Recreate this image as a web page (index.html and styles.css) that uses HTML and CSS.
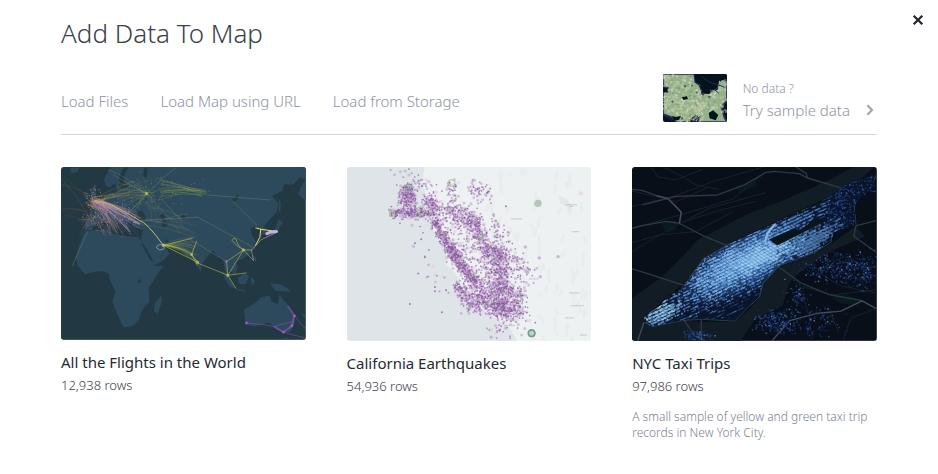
FILE: index.html
```html
<!DOCTYPE html>
<html lang="en">
<head>
<meta charset="utf-8">
<title>Add Data To Map</title>
<link rel="stylesheet" href="styles.css">
</head>
<body>
<main class="modal">
  <button class="close" type="button" aria-label="Close">
    <svg viewBox="0 0 12 12" width="12" height="12"><path d="M1.7 1.7 10.3 10.3M10.3 1.7 1.7 10.3" fill="none" stroke="#242730" stroke-width="2.3"/></svg>
  </button>
  <h1 class="title">Add Data To Map</h1>
  <div class="toolbar">
    <nav class="tabs">
      <button class="tab" type="button">Load Files</button>
      <button class="tab" type="button">Load Map using URL</button>
      <button class="tab" type="button">Load from Storage</button>
    </nav>
    <a class="sample" href="#samples">
      <svg class="thumb" viewBox="0 0 192 144" aria-hidden="true">
        <rect width="192" height="144" fill="#04131c"/>
        <path d="M0 0H94L97 24 112 35 118 62 142 54 162 46 165 25 180 15 192 20V80L175 98 184 130 192 144H115L100 125 70 144H40L25 130 0 120V57L13 54 14 41 0 38Z" fill="#94b18a" stroke="#282e5a" stroke-width="5"/>
        <g id="terrain"></g>
        <path d="M107 35 119 39 130 36 144 52 140 60 124 59ZM137 117 150 109 166 123 158 139 140 133ZM56 70 72 67 75 75 62 78ZM0 38 14 44 12 54 0 54ZM26 126 40 129 54 125 48 138 34 140ZM94 0H192V15L169 20 158 46 145 48 119 32 98 25Z" fill="#04131c"/>
        <path d="M118 8C140 32 158 27 184 40M153 46 168 58M0 122 26 139M94 139 112 127" fill="none" stroke="#252d56" stroke-width="3"/>
      </svg>
      <span class="sample-text"><span class="hint">No data ?</span><span class="try">Try sample data</span></span>
      <svg class="chevron" viewBox="0 0 8 12" width="8" height="12"><path d="M1.4 1.2 6 6 1.4 10.8" fill="none" stroke="#a0a7b4" stroke-width="2.2"/></svg>
    </a>
  </div>
  <section class="maps" id="samples">
    <article class="card">
      <svg class="map flights" viewBox="18 21 735 519" preserveAspectRatio="none" aria-hidden="true">
        <rect x="18" y="21" width="735" height="519" fill="#223842"/>
        <g fill="#2c4a5b">
          <path d="M167 21 148 55 151 76 164 83 178 70 187 84 186 98 160 101 135 118 106 138 118 150 115 176 91 181 90 207 108 210 129 185 151 181 166 174 184 197 190 188 177 172 184 168 207 190 215 207 222 201 218 190 232 184 237 203 264 207 258 235 270 265 293 312 302 315 328 299 344 281 329 257 350 266 380 272 395 288 408 293 420 310 438 336 441 312 458 289 475 272 490 290 504 298 512 340 522 360 520 329 540 345 549 323 543 303 562 297 584 283 605 250 590 222 586 207 600 199 614 206 621 226 636 219 628 199 648 174 667 155 670 128 652 108 682 92 689 73 715 74 735 52 753 60V21Z"/>
          <path d="M105 212 150 208 185 225 215 229 250 231 262 245 285 290 298 318 325 318 300 355 281 385 284 425 262 450 250 485 232 499 205 502 190 470 172 425 182 395 165 362 162 342 145 334 125 335 90 343 69 318 62 290 75 250 86 222Z"/>
          <path d="M319 407 321 425 309 461 297 455 300 430ZM567 450 600 430 620 412 645 407 650 425 668 433 675 403 690 430 715 465 721 490 706 517 682 517 660 500 640 488 600 500 572 495ZM107 86 117 80 127 111 107 117ZM88 101 102 98 101 113 89 115ZM45 23 75 22 66 37 48 40ZM672 113 678 130 676 165 671 148ZM671 178 685 188 674 200 670 218 642 229 637 222 660 211ZM548 355 569 339 583 349 571 374 553 372ZM501 332 521 350 541 384 528 383 512 361ZM541 385 570 390 573 395 545 391ZM590 350 601 365 593 378 588 363ZM645 371 675 372 699 385 710 398 685 394 662 393ZM685 533 702 534 694 540 686 540ZM593 287 604 293 603 307 595 300ZM738 80 753 60V120L744 116 730 102ZM740 457 749 464 753 475 746 472Z"/>
        </g>
        <path d="M192 55 201 31 212 21 219 25 207 49 207 67 223 78 201 88 193 80ZM244 169 250 152 263 154 270 167 275 179 257 184 240 180ZM315 168 324 156 334 163 329 175 338 193 327 203 319 191 322 181ZM378 169 386 162 394 173 383 178ZM268 23 279 27 274 55 265 49ZM257 246 272 262 292 297 294 309 284 298ZM331 235 343 247 353 248 348 253 333 247ZM530 119 541 112 551 102 548 119 537 125ZM249 360 256 358 258 368 250 370Z" fill="#223842"/>
        <g id="flights" fill="none" stroke-linecap="round"></g>
        <g fill="none" stroke-linecap="round" stroke-linejoin="round">
          <path d="M120 122C166 126 208 155 253 181Q277 188 325 256" stroke="#c7b87a" stroke-width="3"/>
          <path d="M325 256Q370 258 410 284L432 311M410 284 425 244M410 284 427 315M325 256 429 307M325 256 412 235" stroke="#b9b93b" stroke-width="3" stroke-opacity=".7"/>
          <path d="M432 311 519 346 543 385M519 346 574 339M519 346 566 270M566 270Q545 260 532 242 532 233 543 237 548 258 566 270L590 270M515 305 566 270M515 305 519 346" stroke="#b7bd43" stroke-width="3" stroke-opacity=".6"/>
          <path d="M603 204 618 208 615 232 602 257M618 208 668 215" stroke="#f1dc70" stroke-width="3"/>
          <path d="M590 272 618 240 668 216M566 270 596 302 590 272" stroke="#ba9798" stroke-width="2"/>
          <path d="M636 221 645 217 664 215" stroke="#c9aee4" stroke-width="9"/>
          <path d="M575 489 630 495 658 500 686 517 711 498 719 468 689 425M658 500 711 485M711 498 719 468 753 508M686 517 753 535" stroke="#9659bd" stroke-width="2" stroke-opacity=".7"/>
          <path d="M658 500 686 517 711 498 719 468 700 440" stroke="#8a50b4" stroke-width="6" stroke-opacity=".55"/>
          <path d="M575 489h0M686 517h0M711 498h0M719 468h0M515 305h0" stroke="#b062d2" stroke-width="8" stroke-opacity=".85"/>
          <path d="M325 256h0M410 284h0M428 307h0M519 346h0M566 270h0M275 101h0" stroke="#cbd04c" stroke-width="10" stroke-opacity=".6"/>
          <path d="M305 262Q308 250 325 256 335 269 315 270ZM235 188 243 185 253 192" stroke="#a5b9ca" stroke-width="3" stroke-opacity=".7"/>
        </g>
      </svg>
      <h2 class="name">All the Flights in the World</h2>
      <p class="rows">12,938 rows</p>
    </article>
    <article class="card">
      <svg class="map" viewBox="18 21 732 522" preserveAspectRatio="none" aria-hidden="true">
        <rect x="18" y="21" width="732" height="522" fill="#edf1f1"/>
        <path id="hills" fill="none" stroke="#e9ecec" stroke-width="9" stroke-linecap="round"/>
        <path d="M18 21H251L242 64 253 103 254 143 273 178 276 213 307 254 315 284 316 315 346 344 361 375 371 411 402 420 430 459 482 486 503 503 527 543H18Z" fill="#dfe4e9"/>
        <path d="M650 104 660 111 677 119 691 142 684 151 669 139 656 128Z" fill="#e1e7eb"/>
        <g id="quakes" fill="none" stroke-linecap="round"></g>
        <g fill="none">
          <circle cx="570" cy="520" r="10" stroke="#6ba184" stroke-width="5" fill="#c9cbd3"/>
          <circle cx="589" cy="130" r="9" stroke="#a8cfaa" stroke-width="4" fill="#c7b7d2"/>
          <circle cx="331" cy="69" r="10" stroke="#a9c7a3" stroke-width="3"/>
          <circle cx="203" cy="82" r="10" stroke="#719b83" stroke-width="3"/>
          <circle cx="239" cy="151" r="11" stroke="#a0c792" stroke-width="3"/>
          <circle cx="153" cy="162" r="8" stroke="#a0c792" stroke-width="3"/>
          <path d="M533 408A13 13 0 0 1 540 430M402 232Q415 223 420 240M476 399 486 400" stroke="#92b78a" stroke-width="3"/>
        </g>
        <path d="M509 177H541M673 134H705M683 139H696M690 215H712M562 357H592M683 399H714M688 437H726M671 474H696M714 526H736M334 249H368M405 331H424M488 497H522M407 419H430" stroke="#b3b7bd" stroke-width="4" stroke-dasharray="3 1 5 1" stroke-opacity=".65"/>
      </svg>
      <h2 class="name">California Earthquakes</h2>
      <p class="rows">54,936 rows</p>
    </article>
    <article class="card">
      <svg class="map" viewBox="18 21 735 522" preserveAspectRatio="none" aria-hidden="true">
        <defs>
          <clipPath id="island"><path d="M54 470 77 454 102 437 126 408 158 394 191 353 233 296 312 251 392 215 465 180 580 128 657 76 742 44 748 88 705 112 684 139 690 195 623 218 618 243 569 275 457 319 412 369 400 412 364 445 326 482 226 477 174 480 77 501 54 486Z"/></clipPath>
          <radialGradient id="glow"><stop offset="0" stop-color="#7fbdf5" stop-opacity=".85"/><stop offset=".5" stop-color="#4581d0" stop-opacity=".55"/><stop offset="1" stop-color="#1d4388" stop-opacity="0"/></radialGradient>
        </defs>
        <rect x="18" y="21" width="735" height="522" fill="#090f19"/>
        <path d="M18 414 106 353 159 301 215 240 360 165 480 118 615 58 684 21H745L688 72 575 127 460 180 310 250 233 296 189 356 98 434 50 475 77 503 174 484 326 487 370 448 405 410 415 369 457 322 569 280 620 249 690 198 718 230 640 262 590 290 545 321 510 345 490 370 470 437 386 480 345 543H18Z" fill="#121c24"/>
        <path d="M610 400 667 405 705 422 680 435 637 427ZM330 78 389 62 395 77 340 98ZM105 190 150 181 151 210 122 218Z" fill="#091a1c"/>
        <g fill="none" stroke="#18222c" stroke-width="3">
          <path d="M18 140 150 107 260 65 412 21M18 205 170 163 320 117 415 40M18 275 144 200 250 145 420 98M18 93 90 110 150 125 245 83M75 21 94 50 149 60 230 28M110 21 170 49 210 75 279 88M18 248 100 225 210 215 323 154M160 190 270 154 390 124M520 370 550 471 560 543M530 380 620 405 753 390M610 452 640 520M550 321 645 378 753 400M620 275 700 310 753 323M650 543 675 475 753 445"/>
        </g>
        <path d="M18 88 48 91 92 107 126 116 166 157 160 190 229 226 302 256M160 190 119 184 50 197 18 205M50 135 150 109 275 105 357 74 420 37 445 34 520 41 545 54 661 88 753 95M545 54 541 40 510 21M18 327 60 340 181 379M174 480 207 529 239 543M457 320 526 370 610 404 709 422M684 90 673 150 688 165 690 198 753 181M690 198 684 229 753 278M753 47 720 91 688 111 685 160M226 478 226 543M457 320 412 369 400 412" fill="none" stroke="#2c3944" stroke-width="4" stroke-linejoin="round"/>
        <path d="M35 543 54 487M438 543 492 482 570 461 645 454 709 423 753 447M92 107 126 116 166 157 160 190" fill="none" stroke="#414f5a" stroke-width="4" stroke-linejoin="round"/>
        <g id="boroughs" fill="none" stroke-linecap="square"></g>
        <g clip-path="url(#island)">
          <rect x="18" y="21" width="735" height="522" fill="#0b1426"/>
          <ellipse cx="360" cy="305" rx="260" ry="95" fill="url(#glow)" transform="rotate(-27 360 305)"/>
          <g id="streets" fill="none"></g>
          <path d="M429 239 505 205 522 212 570 175 592 184 529 219 454 257Z" fill="#07151c"/>
          <path d="M417 248 426 218 448 192" fill="none" stroke="#8db6df" stroke-width="6"/>
          <g id="uptown" fill="none"></g>
        </g>
        <path d="M312 251 233 296 191 353M77 501 174 482 226 478 326 484 364 445 400 412 412 369 457 319 569 277 618 245 615 228" fill="none" stroke="#3b5068" stroke-width="2"/>
      </svg>
      <h2 class="name">NYC Taxi Trips</h2>
      <p class="rows">97,986 rows</p>
      <p class="about">A small sample of yellow and green taxi trip records in New York City.</p>
    </article>
  </section>
</main>
<script src="maps.js"></script>
</body>
</html>
```
FILE: styles.css
```css
* { box-sizing: border-box; }
body {
  margin: 0;
  background: #fff;
  color: #3a414c;
  font-family: "Noto Sans", "Open Sans", sans-serif;
}
button { border: 0; padding: 0; background: none; font: inherit; color: inherit; cursor: pointer; }
.modal { position: relative; padding: 16px 61px 32px; }
.close { position: absolute; top: 14px; right: 14px; width: 12px; height: 12px; }
.close svg { display: block; }
.title { margin: 0; font-size: 26px; line-height: 34px; font-weight: 300; }
.toolbar {
  display: flex;
  justify-content: space-between;
  align-items: center;
  margin-top: 24px;
  padding-bottom: 12px;
  border-bottom: 1px solid #d4d6d9;
}
.tabs { display: flex; gap: 32px; padding-top: 6px; }
.tab { font-size: 15px; line-height: 20px; font-weight: 300; color: #8d95a4; }
.sample { display: flex; align-items: center; color: #8d95a4; text-decoration: none; }
.thumb { width: 64px; height: 48px; border-radius: 2px; }
.sample-text { display: flex; flex-direction: column; margin: 4px 16px 0; }
.hint { font-size: 12px; line-height: 20px; font-weight: 300; }
.try { font-size: 15px; line-height: 22px; font-weight: 300; }
.chevron { margin: 24px 3px 0 0; }
.maps {
  display: grid;
  grid-template-columns: repeat(3, 30%);
  justify-content: space-between;
  margin-top: 32px;
}
.map { display: block; width: 100%; aspect-ratio: 245 / 174; border-radius: 3px; }
.flights { aspect-ratio: 245 / 173; }
.name { margin: 12px 0 0; font-size: 15px; line-height: 20px; font-weight: 400; color: #242a35; }
.rows { margin: 3px 0 0; font-size: 13px; line-height: 20px; font-weight: 300; }
.about { margin: 13px 0 0; font-size: 12px; line-height: 16px; font-weight: 300; color: #7b828f; }
```
FILE: maps.js
```js
// Fills the map previews with seeded point clouds and routes.
let seed = 7;
function rand() {
  seed = (seed + 0x6d2b79f5) | 0;
  let t = Math.imul(seed ^ (seed >>> 15), 1 | seed);
  t = (t + Math.imul(t ^ (t >>> 7), 61 | t)) ^ t;
  return ((t ^ (t >>> 14)) >>> 0) / 4294967296;
}
const spread = () => rand() + rand() + rand() - 1.5;
const between = (a, b) => a + rand() * (b - a);
function add(id, d, color, width, opacity) {
  const p = document.createElementNS("http://www.w3.org/2000/svg", "path");
  p.setAttribute("d", d);
  p.setAttribute("stroke", color);
  p.setAttribute("stroke-width", width);
  p.setAttribute("stroke-opacity", opacity);
  document.getElementById(id).append(p);
}
const n = (v) => v.toFixed(1);
const dot = (x, y) => `M${n(x)} ${n(y)}h.1`;

// Relief on the sample thumbnail
for (const [color, count, size, op] of [["#c9cdae", 190, 10, .6], ["#a3bf8e", 90, 8, .6], ["#5d8d70", 70, 5, .5], ["#283e60", 14, 6, .7], ["#dddcc4", 120, 4, .7]]) {
  let d = "";
  for (let i = 0; i < count; i++) {
    const x = between(0, 190), y = between(0, 140);
    if (y < 45 && x > 88 && x < 168) continue;
    if (y > 112 && (x < 40 || x > 125)) continue;
    d += `M${n(x)} ${n(y)}l${n(between(-5, 5))} ${n(between(3, 7))}`;
  }
  add("terrain", d, color, size, op);
}

// Flight routes: start box, end box, count, colours
const routes = [
  [[100, 140, 112, 140], [150, 265, 150, 230], 66, ["#bda0c8", "#dd9672", "#8b64ad"]],
  [[90, 140, 120, 200], [70, 190, 175, 230], 34, ["#87609b", "#ae8b61"]],
  [[95, 150, 110, 140], [210, 300, 60, 125], 12, ["#b3a94b", "#b87959"]],
  [[272, 278, 98, 104], [160, 360, 25, 200], 26, ["#a4b14d", "#8a9b58"]],
  [[300, 335, 50, 120], [435, 460, 88, 110], 13, ["#a7b344"]],
  [[322, 328, 253, 259], [395, 430, 230, 312], 14, ["#bbc047"]],
  [[240, 325, 100, 200], [370, 430, 160, 245], 12, ["#768e5d", "#8d7899"]],
  [[18, 30, 40, 230], [90, 125, 110, 210], 8, ["#87604a"]]
];
for (const [a, b, count, colors] of routes) {
  for (const color of colors) {
    for (let i = 0; i < count / colors.length; i++) {
      const x = between(a[0], a[1]), y = between(a[2], a[3]);
      const u = between(b[0], b[1]), v = between(b[2], b[3]);
      add("flights", `M${n(x)} ${n(y)}Q${n((x + u) / 2 + 6)} ${n((y + v) / 2 - 10)} ${n(u)} ${n(v)}`, color, 1.6, between(.2, .55).toFixed(2));
    }
  }
}
let cities = "", warm = "", russia = "";
for (let i = 0; i < 130; i++) cities += dot(175 + spread() * 75, 165 + spread() * 60);
for (let i = 0; i < 70; i++) warm += dot(118 + spread() * 32, 130 + spread() * 40);
for (let i = 0; i < 60; i++) russia += dot(320 + spread() * 110, 95 + spread() * 45);
add("flights", cities, "#a295c2", 3, .65);
add("flights", warm, "#e39558", 4, .55);
add("flights", russia, "#a9b14a", 3, .55);
add("flights", "M120 122L253 193M118 125L190 150M125 125Q185 135 243 188M120 120Q160 145 225 215", "#d6b5c0", 4, .45);
add("flights", "M52 318L100 210M400 235L515 305M460 105L645 120M530 120L605 195M425 170L600 265M250 182L425 172M320 118L383 187M275 101L318 62L455 95M318 58L362 24M175 45L275 101", "#a9a579", 2, .4);

// Terrain hints east of the coast
let hills = "";
for (let i = 0; i < 90; i++) {
  const x = between(430, 745), y = between(25, 535);
  hills += `M${n(x)} ${n(y)}l${n(between(-8, 8))} ${n(between(5, 32))}`;
}
document.getElementById("hills").setAttribute("d", hills);

// Earthquake clusters: x1, y1, x2, y2, spread x, spread y, count
const faults = [
  [200, 85, 200, 135, 28, 20, 160], [150, 158, 285, 160, 12, 16, 200],
  [262, 115, 285, 150, 24, 20, 80], [278, 185, 345, 290, 18, 20, 240],
  [325, 270, 405, 370, 20, 16, 290], [315, 155, 370, 165, 30, 30, 95],
  [330, 60, 335, 130, 16, 16, 30], [385, 75, 445, 105, 28, 25, 40],
  [385, 165, 420, 240, 26, 24, 170], [430, 255, 490, 300, 32, 24, 210],
  [465, 300, 485, 385, 32, 28, 210], [350, 375, 400, 450, 26, 22, 130],
  [400, 400, 540, 420, 24, 44, 400], [440, 440, 535, 460, 34, 30, 190],
  [450, 190, 490, 240, 26, 28, 35], [520, 290, 555, 350, 28, 35, 45],
  [340, 190, 430, 340, 45, 45, 90], [200, 210, 300, 380, 50, 55, 12],
  [430, 500, 550, 500, 35, 30, 20], [170, 35, 280, 90, 30, 25, 25]
];
for (const [color, share, size, op] of [["#dfbee2", .13, 11, .45], ["#b08bc4", .3, 9, .45], ["#905aa5", .5, 6, .5], ["#70358a", .45, 5, .6], ["#eef0ef", .06, 5, .5], ["#8eb994", .018, 8, .45]]) {
  let d = "";
  for (const [x1, y1, x2, y2, sx, sy, count] of faults) {
    for (let i = 0; i < count * share; i++) {
      const t = rand();
      d += dot(x1 + (x2 - x1) * t + spread() * sx, y1 + (y2 - y1) * t + spread() * sy);
    }
  }
  add("quakes", d, color, size, op);
}
add("quakes", "M221 250h.1M231 341h.1M281 381h.1M281 394h.1M314 391h.1M206 432h.1M302 457h.1M493 139h.1M240 238h.1", "#8e65a4", 6, .8);
add("quakes", "M593 294h.1M649 290h.1M596 350h.1M558 338h.1M456 164h.1M551 261h.1M449 532h.1", "#c2a4d0", 10, .8);
add("quakes", "M718 100h.1", "#ead3e6", 13, .8);

// Avenues follow the island; side streets cut across them
function street(x, y, length, angle) {
  return `M${n(x)} ${n(y)}l${n(Math.cos(angle) * length)} ${n(Math.sin(angle) * length)}`;
}
const along = -.44, across = .6, slope = Math.tan(along);
for (const [color, count, width, op] of [["#1f4187", 1500, 3, .6], ["#3566b8", 1100, 3, .6]]) {
  let d = "";
  for (let i = 0; i < count; i++) {
    const x = between(40, 650);
    const row = Math.round(between(20, 95)) * 10;
    d += street(x, row + (x - 20) * slope, between(6, 20), along);
  }
  add("streets", d, color, width, op);
}
// Pickup density: centre, spread, count; rows snap to the avenue grid
for (const [color, cx, cy, sx, sy, count, width, op] of [
  ["#4a86d6", 330, 330, 200, 95, 800, 4, .65],
  ["#75b2ee", 325, 322, 170, 75, 900, 4, .7],
  ["#9bd3fa", 350, 305, 130, 50, 420, 4, .7],
  ["#a9dcfb", 420, 285, 70, 30, 260, 7, .6],
  ["#5a93dc", 480, 200, 110, 26, 260, 4, .7],
  ["#6ca6e6", 555, 243, 70, 32, 420, 6, .6],
  ["#7dbcf0", 105, 464, 55, 30, 200, 6, .65],
  ["#b5e0fa", 100, 462, 45, 26, 70, 4, .7]
]) {
  let d = "";
  for (let i = 0; i < count; i++) {
    const x = cx + spread() * sx;
    const y = cy + (x - cx) * slope + spread() * sy;
    const base = (x - 20) * slope;
    d += street(x, Math.round((y - base) / 10) * 10 + base + between(-2, 2), between(3, 11), along);
  }
  add("streets", d, color, width, op);
}
let sparks = "";
for (let i = 0; i < 900; i++) {
  const dx = spread() * 190;
  sparks += dot(340 + dx, 312 + dx * slope + spread() * 75);
}
add("streets", sparks.replaceAll("h.1", "h4"), "#8fc6f7", 4, .55);
let side = "";
for (let x = -500; x < 760; x += 16) side += street(x, 100, 1100, across);
add("streets", side, "#142a58", 2, .4);
add("uptown", "M580 100H760V180H640L600 160Z", "none", 0, 0);
for (const [color, count, size, op] of [["#0b1426", 420, 6, .6], ["#1d3f8f", 330, 4, .75], ["#3d6cc8", 80, 4, .7]]) {
  let d = "";
  for (let i = 0; i < count; i++) d += dot(between(598, 745), between(45, 210));
  add("uptown", d.replaceAll("h.1", "h4"), color, size, op);
}

// Scattered pickups in the outer boroughs
for (const [cx, cy, sx, sy, count] of [[640, 325, 115, 45, 280], [455, 485, 60, 38, 200], [215, 528, 45, 13, 80], [515, 405, 35, 25, 50], [570, 490, 75, 50, 80], [710, 340, 50, 60, 80]]) {
  for (const [color, share, size] of [["#173271", .7, 4], ["#2c58a8", .35, 4], ["#6f9fd0", .06, 4]]) {
    let d = "";
    for (let i = 0; i < count * share; i++) d += dot(cx + spread() * sx, cy + spread() * sy);
    add("boroughs", d, color, size, .75);
  }
}
```
